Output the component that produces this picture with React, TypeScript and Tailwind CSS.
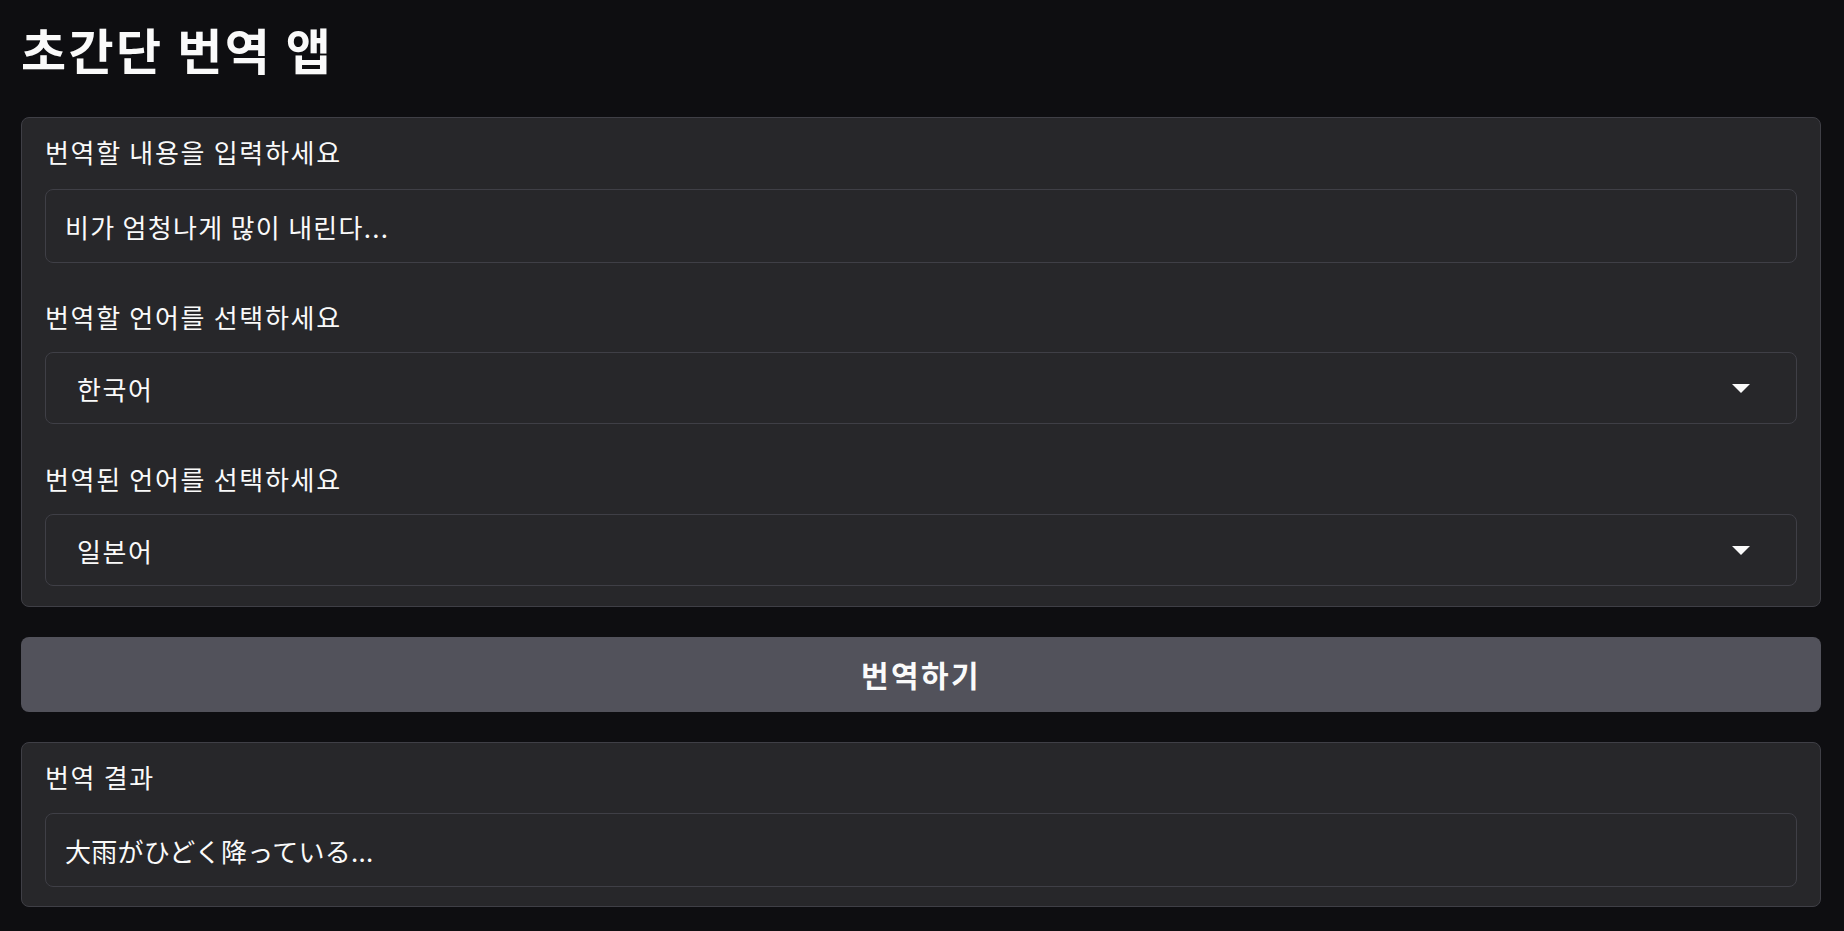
import React from 'react';

const font = { fontFamily: '"Noto Sans CJK KR", "Noto Sans CJK JP", "Noto Sans", sans-serif' };

function Label({ children }: { children: React.ReactNode }) {
  return <div className="h-[33px] text-[26px] leading-[33px] tracking-[0.065em] text-[#fafafa]">{children}</div>;
}

function TextBox({ value, jp }: { value: string; jp?: boolean }) {
  return (
    <div
      className={
        'flex h-[74px] items-center rounded-lg border border-[#3f3f46] bg-[#27272a] px-[19px] text-[26px] text-[#fafafa] ' +
        (jp ? 'tracking-[0.01em]' : 'tracking-[0.05em]')
      }
    >
      {value}
    </div>
  );
}

function SelectBox({ value }: { value: string }) {
  return (
    <div className="flex h-[72px] items-center justify-between rounded-lg border border-[#3f3f46] bg-[#27272a] pl-[31px] pr-[46px] text-[26px] tracking-[0.06em] text-[#fafafa]">
      <span>{value}</span>
      <svg width="18" height="9" viewBox="0 0 18 9">
        <path d="M0 0 L18 0 L9 9 Z" fill="#fafafa" />
      </svg>
    </div>
  );
}

export default function App() {
  return (
    <div className="min-h-screen bg-[#0e0e11] pl-[21px] pr-[23px] pt-[21px] pb-6" style={font}>
      <h1 className="h-[56px] text-[49px] font-bold leading-[56px] tracking-[0.05em] text-[#fafafa]">초간단 번역 앱</h1>

      <div className="mt-[40px] rounded-lg border border-[#3f3f46] bg-[#27272a] px-[23px] pt-[17px] pb-[20px]">
        <Label>번역할 내용을 입력하세요</Label>
        <div className="mt-[21px]">
          <TextBox value="비가 엄청나게 많이 내린다..." />
        </div>

        <div className="mt-[37px]">
          <Label>번역할 언어를 선택하세요</Label>
        </div>
        <div className="mt-[19px]">
          <SelectBox value="한국어" />
        </div>

        <div className="mt-[38px]">
          <Label>번역된 언어를 선택하세요</Label>
        </div>
        <div className="mt-[19px]">
          <SelectBox value="일본어" />
        </div>
      </div>

      <button className="mt-[30px] flex h-[75px] w-full items-center justify-center rounded-lg bg-[#52525b] text-[30px] font-bold tracking-[0.08em] text-[#fafafa]">
        번역하기
      </button>

      <div className="mt-[30px] rounded-lg border border-[#3f3f46] bg-[#27272a] px-[23px] pt-[17px] pb-[19px]">
        <Label>번역 결과</Label>
        <div className="mt-[20px]">
          <TextBox value="大雨がひどく降っている..." jp />
        </div>
      </div>
    </div>
  );
}
